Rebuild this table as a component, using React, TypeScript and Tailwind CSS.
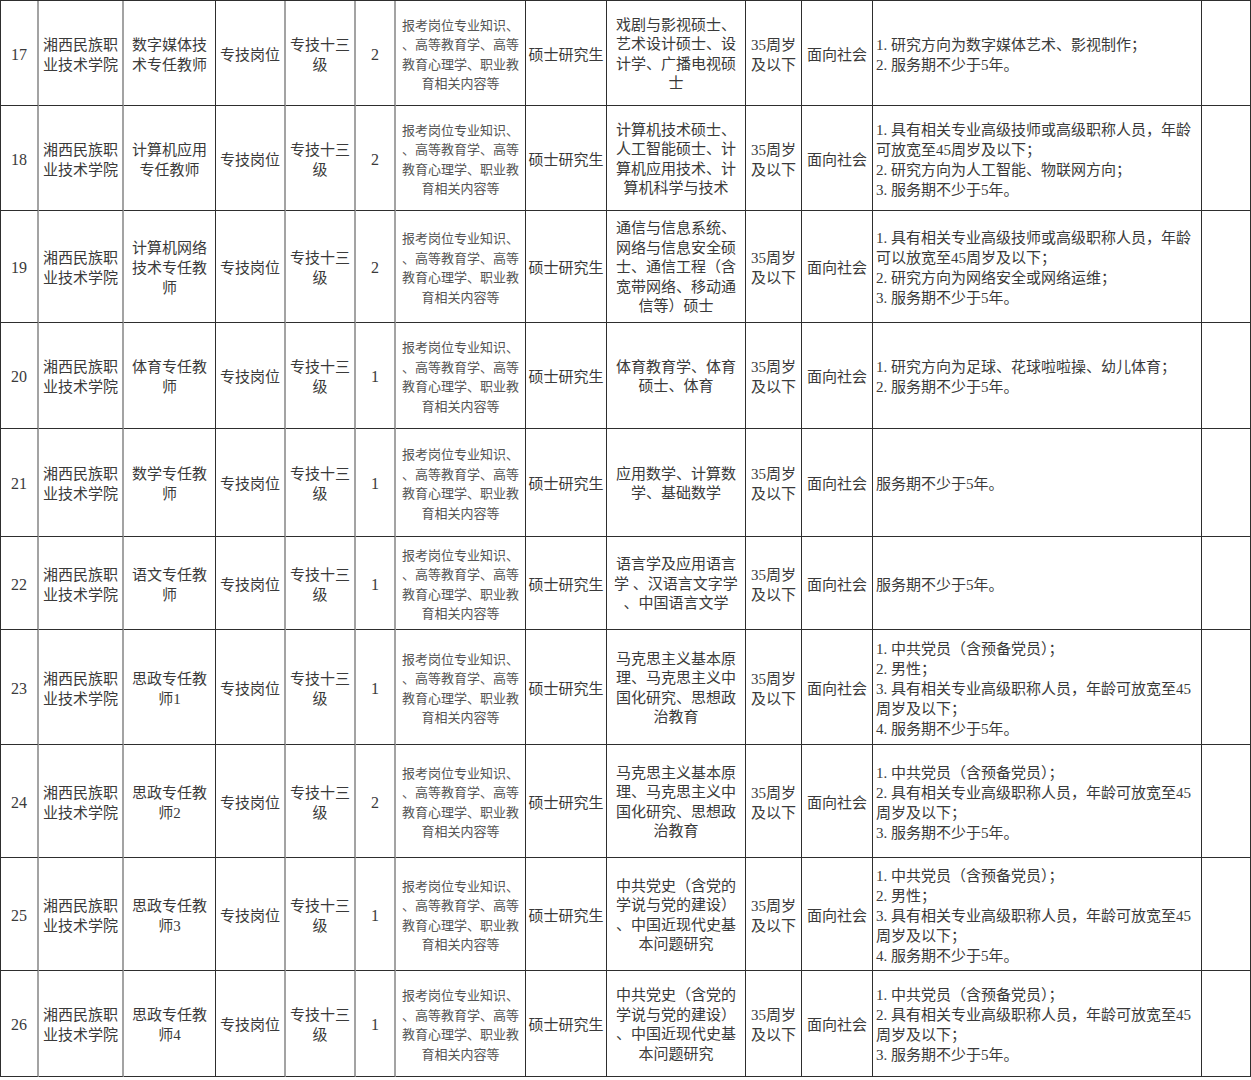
import React from "react";

type Row = {
  no: string;
  post: string[];
  count: string;
  major: string[];
  req: string[];
  h: string;
};

const examLines = ["报考岗位专业知识、", "、高等教育学、高等", "教育心理学、职业教", "育相关内容等"];

const marx = ["马克思主义基本原", "理、马克思主义中", "国化研究、思想政", "治教育"];
const party = ["中共党史（含党的", "学说与党的建设）", "、中国近现代史基", "本问题研究"];
const req4 = [
  "1. 中共党员（含预备党员）；",
  "2. 男性；",
  "3. 具有相关专业高级职称人员，年龄可放宽至45",
  "周岁及以下；",
  "4. 服务期不少于5年。",
];
const req3 = [
  "1. 中共党员（含预备党员）；",
  "2. 具有相关专业高级职称人员，年龄可放宽至45",
  "周岁及以下；",
  "3. 服务期不少于5年。",
];

const rows: Row[] = [
  {
    no: "17",
    post: ["数字媒体技", "术专任教师"],
    count: "2",
    major: ["戏剧与影视硕士、", "艺术设计硕士、设", "计学、广播电视硕", "士"],
    req: ["1. 研究方向为数字媒体艺术、影视制作；", "2. 服务期不少于5年。"],
    h: "h-[105px]",
  },
  {
    no: "18",
    post: ["计算机应用", "专任教师"],
    count: "2",
    major: ["计算机技术硕士、", "人工智能硕士、计", "算机应用技术、计", "算机科学与技术"],
    req: [
      "1. 具有相关专业高级技师或高级职称人员，年龄",
      "可放宽至45周岁及以下；",
      "2. 研究方向为人工智能、物联网方向；",
      "3. 服务期不少于5年。",
    ],
    h: "h-[105px]",
  },
  {
    no: "19",
    post: ["计算机网络", "技术专任教", "师"],
    count: "2",
    major: ["通信与信息系统、", "网络与信息安全硕", "士、通信工程（含", "宽带网络、移动通", "信等）硕士"],
    req: [
      "1. 具有相关专业高级技师或高级职称人员，年龄",
      "可以放宽至45周岁及以下；",
      "2. 研究方向为网络安全或网络运维；",
      "3. 服务期不少于5年。",
    ],
    h: "h-[112px]",
  },
  {
    no: "20",
    post: ["体育专任教", "师"],
    count: "1",
    major: ["体育教育学、体育", "硕士、体育"],
    req: ["1. 研究方向为足球、花球啦啦操、幼儿体育；", "2. 服务期不少于5年。"],
    h: "h-[106px]",
  },
  {
    no: "21",
    post: ["数学专任教", "师"],
    count: "1",
    major: ["应用数学、计算数", "学、基础数学"],
    req: ["服务期不少于5年。"],
    h: "h-[108px]",
  },
  {
    no: "22",
    post: ["语文专任教", "师"],
    count: "1",
    major: ["语言学及应用语言", "学 、汉语言文字学", "、中国语言文学"],
    req: ["服务期不少于5年。"],
    h: "h-[93px]",
  },
  { no: "23", post: ["思政专任教", "师1"], count: "1", major: marx, req: req4, h: "h-[115px]" },
  { no: "24", post: ["思政专任教", "师2"], count: "2", major: marx, req: req3, h: "h-[113px]" },
  { no: "25", post: ["思政专任教", "师3"], count: "1", major: party, req: req4, h: "h-[113px]" },
  { no: "26", post: ["思政专任教", "师4"], count: "1", major: party, req: req3, h: "h-[106px]" },
];

const gray = "border-r-2 border-r-[#a3a3a3]";
const dark = "border-r border-r-[#2e2e2e]";
const cell =
  "flex flex-col items-center justify-center text-center pt-[3px] border-b border-b-[#2e2e2e] overflow-hidden";

function Lines({ lines }: { lines: string[] }) {
  return (
    <>
      {lines.map((l, i) => (
        <span key={i} className="block whitespace-nowrap">
          {l}
        </span>
      ))}
    </>
  );
}

export default function App() {
  return (
    <div
      className="w-[1251px] bg-white text-[#3a3a3a] text-[15px] leading-[20px]"
      style={{ fontFamily: '"Liberation Serif", "Noto Sans CJK SC", serif' }}
    >
      <div className="border-t border-t-[#2e2e2e] border-l border-l-[#2e2e2e]">
        {rows.map((r) => (
          <div
            key={r.no}
            className={`grid grid-cols-[38px_85px_92px_70px_70px_40px_130px_81px_139px_56px_71px_329px_49px] ${r.h}`}
          >
            <div className={`${cell} ${gray} text-[16px]`}>{r.no}</div>
            <div className={`${cell} ${gray}`}>
              <Lines lines={["湘西民族职", "业技术学院"]} />
            </div>
            <div className={`${cell} ${dark}`}>
              <Lines lines={r.post} />
            </div>
            <div className={`${cell} ${gray}`}>专技岗位</div>
            <div className={`${cell} ${gray}`}>
              <Lines lines={["专技十三", "级"]} />
            </div>
            <div className={`${cell} ${gray} text-[16px]`}>{r.count}</div>
            <div className={`${cell} ${dark} text-[13px] leading-[19.5px] text-[#555]`}>
              <Lines lines={examLines} />
            </div>
            <div className={`${cell} ${dark}`}>硕士研究生</div>
            <div className={`${cell} ${dark} leading-[19.5px]`}>
              <Lines lines={r.major} />
            </div>
            <div className={`${cell} ${dark}`}>
              <Lines lines={["35周岁", "及以下"]} />
            </div>
            <div className={`${cell} ${dark}`}>面向社会</div>
            <div className={`${cell} ${dark} !items-start !text-left pl-[3px]`}>
              <Lines lines={r.req} />
            </div>
            <div className={`${cell} ${dark}`} />
          </div>
        ))}
      </div>
    </div>
  );
}
